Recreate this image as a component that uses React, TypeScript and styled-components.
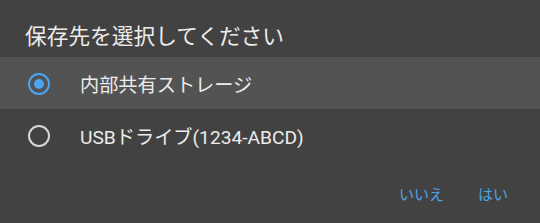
import React from 'react';
import styled, { createGlobalStyle } from 'styled-components';

const GlobalStyle = createGlobalStyle`
    html, body {
        margin: 0;
        padding: 0;
        background: #424242;
    }
    body {
        font-family: Roboto, "Noto Sans CJK JP", sans-serif;
    }
`;

const StyledDialog = styled.div`
    width: 540px;
    height: 223px;
    background-color: #424242;
    display: flex;
    flex-direction: column;
`;

const StyledTitle = styled.h2`
    margin: 0;
    padding: 24px 0 0 25px;
    height: 33px;
    font-size: 21.7px;
    line-height: 26px;
    font-weight: 400;
    color: #ececec;
`;

const StyledList = styled.div`
    display: flex;
    flex-direction: column;
`;

const StyledRow = styled.div<{ $selected: boolean }>`
    height: 52px;
    display: flex;
    align-items: center;
    padding-left: 28px;
    background-color: ${props => props.$selected ? '#535353' : 'transparent'};
    cursor: pointer;
`;

const StyledRadio = styled.span<{ $checked: boolean }>`
    width: 22px;
    height: 22px;
    box-sizing: border-box;
    border-radius: 50%;
    border: 2px solid ${props => props.$checked ? '#4aa6f0' : '#d6d6d6'};
    display: flex;
    align-items: center;
    justify-content: center;
    margin-top: 2px;

    &::after {
        content: '';
        width: 10px;
        height: 10px;
        border-radius: 50%;
        background-color: #4aa6f0;
        display: ${props => props.$checked ? 'block' : 'none'};
    }
`;

const StyledLabel = styled.span`
    margin-left: 30px;
    font-size: 19.2px;
    color: #ececec;
    margin-top: 2px;
`;

const StyledActions = styled.div`
    display: flex;
    justify-content: flex-end;
    gap: 34px;
    padding: 22px 32px 0 0;
`;

const StyledButton = styled.button`
    background: none;
    border: none;
    padding: 0;
    font-family: inherit;
    font-size: 15px;
    color: #4ea3e6;
    cursor: pointer;
`;

const options = ['内部共有ストレージ', 'USBドライブ(1234-ABCD)'];

export default function App() {
    const [selected, setSelected] = React.useState<number>(0);

    return (
        <>
            <GlobalStyle />
            <StyledDialog>
                <StyledTitle>保存先を選択してください</StyledTitle>
                <StyledList>
                    {options.map((label, i) => (
                        <StyledRow
                            key={label}
                            $selected={i === 0}
                            onClick={() => setSelected(i)}
                        >
                            <StyledRadio $checked={selected === i} />
                            <StyledLabel>{label}</StyledLabel>
                        </StyledRow>
                    ))}
                </StyledList>
                <StyledActions>
                    <StyledButton>いいえ</StyledButton>
                    <StyledButton>はい</StyledButton>
                </StyledActions>
            </StyledDialog>
        </>
    );
}
